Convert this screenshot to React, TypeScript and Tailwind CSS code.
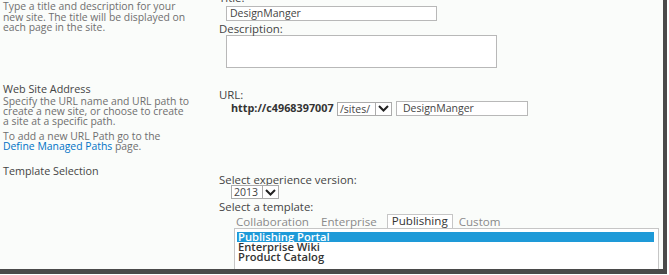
// new site form (template selection)
import React from "react";

const font = { fontFamily: '"Open Sans", "Noto Sans", sans-serif' };

const Chevron = () => (
  <svg width="11" height="7" viewBox="0 0 11 7" className="block">
    <path d="M1 1 L5.5 5.5 L10 1" fill="none" stroke="#222" strokeWidth="2" />
  </svg>
);

const SelectBox = ({ value, width }: { value: string; width: string }) => (
  <div className="flex items-stretch h-[14px]">
    <div className={`${width} border border-[#ababab] bg-white text-[10.5px] leading-[12px] text-[#444] px-[2px]`}>
      {value}
    </div>
    <div className="w-[16px] border border-[#ababab] border-l-0 bg-white flex items-center justify-center">
      <Chevron />
    </div>
  </div>
);

const tabs = ["Collaboration", "Enterprise", "Publishing", "Custom"];
const templates = ["Publishing Portal", "Enterprise Wiki", "Product Catalog"];

export default function App() {
  return (
    <div className="w-[669px] h-[275px] bg-white overflow-hidden" style={font}>
      <div className="w-[667px] h-[274px] border-r-[4px] border-b-[5px] border-[#4a4a4a] overflow-hidden">
        <div className="w-[663px] h-[269px] bg-[#fafcfa] overflow-hidden">
          <div className="-mt-[9px] text-[10.4px] leading-[10.5px]">
            {/* Title & description */}
            <div className="flex h-[92px]">
              <div className="w-[216px] pl-[3px] pt-[10px] text-[#6f6f6f]">
                Type a title and description for your
                <br />
                new site. The title will be displayed on
                <br />
                each page in the site.
              </div>
              <div className="flex-1 pl-[3px] text-[#444] text-[11.4px]">
                <div className="leading-[13px]">Title:</div>
                <div className="ml-[7px] mt-[2px] w-[211px] h-[15px] border border-[#b8b8b8] bg-white px-[3px] leading-[13px] text-[10.5px]">
                  DesignManger
                </div>
                <div className="mt-[1px] leading-[13px]">Description:</div>
                <div className="ml-[7px] w-[271px] h-[33px] border border-[#b8b8b8] bg-white" />
              </div>
            </div>

            {/* Web site address */}
            <div className="flex h-[83px]">
              <div className="w-[216px] pl-[3px] text-[#6f6f6f]">
                <div className="text-[#444] text-[10.8px] leading-[12px]">Web Site Address</div>
                <div className="mt-[1px] leading-[10px]">
                  Specify the URL name and URL path to
                  <br />
                  create a new site, or choose to create
                  <br />
                  a site at a specific path.
                </div>
                <div className="mt-[5px] leading-[10px]">
                  To add a new URL Path go to the
                  <br />
                  <span className="text-[#0072c6]">Define Managed Paths</span> page.
                </div>
              </div>
              <div className="flex-1 pl-[3px] pt-[6px] text-[#444]">
                <div className="leading-[12px] text-[11.4px]">URL:</div>
                <div className="flex items-center ml-[12px]">
                  <span className="font-bold text-[#333] text-[10.8px] w-[106px]">http://c4968397007</span>
                  <SelectBox value="/sites/" width="w-[39px]" />
                  <div className="ml-[4px] w-[132px] h-[15px] border border-[#b8b8b8] bg-white px-[6px] leading-[13px] text-[10.5px]">
                    DesignManger
                  </div>
                </div>
              </div>
            </div>

            {/* Template selection */}
            <div className="flex">
              <div className="w-[216px] pl-[3px] text-[#444] text-[10.8px] leading-[10px]">Template Selection</div>
              <div className="flex-1 pl-[3px] pt-[8px] text-[#444] text-[11.4px]">
                <div className="leading-[11px]">Select experience version:</div>
                <div className="ml-[12px]">
                  <SelectBox value="2013" width="w-[32px]" />
                </div>
                <div className="mt-[2px] leading-[11px]">Select a template:</div>
                <div className="ml-[15px] mt-[2px] flex items-end text-[#8a8a8a] h-[14px] text-[11.6px]">
                  {tabs.map((t) => (
                    <div
                      key={t}
                      className={
                        t === "Publishing"
                          ? "px-[4px] mr-[4px] h-[14px] border border-b-0 border-[#c6c6c6] bg-white text-[#333] leading-[12px]"
                          : "px-[2px] mr-[8px] leading-[12px]"
                      }
                    >
                      {t}
                    </div>
                  ))}
                </div>
                <div className="ml-[15px] w-[425px] h-[50px] border border-[#c6c6c6] bg-white pt-[3px] px-[2px]">
                  {templates.map((t, i) => (
                    <div
                      key={t}
                      className={
                        i === 0
                          ? "bg-[#1e9ad8] text-white font-semibold text-[11.2px] leading-[10px] px-[1px] mr-[2px]"
                          : "text-[#333] font-semibold text-[11.2px] leading-[10px] px-[1px]"
                      }
                    >
                      {t}
                    </div>
                  ))}
                </div>
              </div>
            </div>
          </div>
        </div>
      </div>
    </div>
  );
}
